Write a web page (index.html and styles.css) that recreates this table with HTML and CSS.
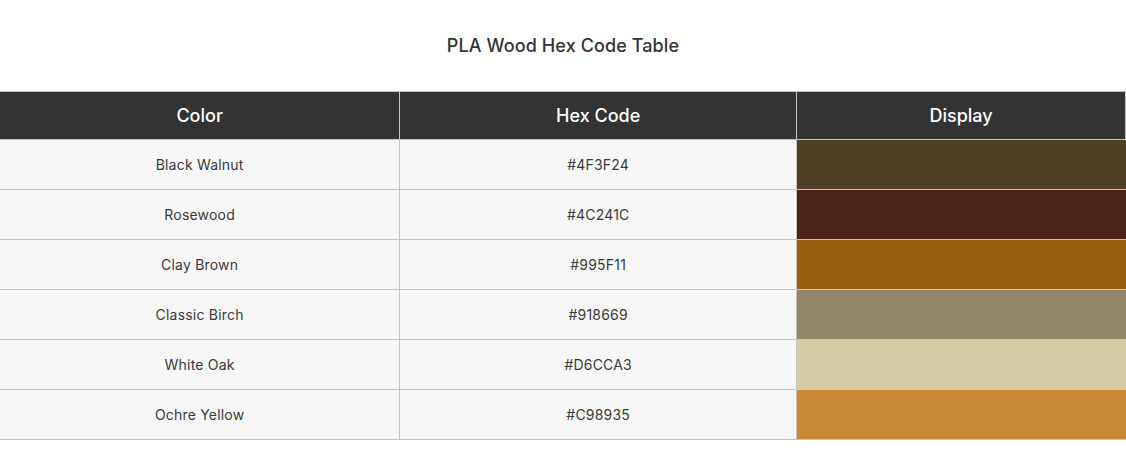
FILE: index.html
```html
<!DOCTYPE html>
<html>
<head>
<meta charset="utf-8">
<link rel="stylesheet" href="styles.css">
</head>
<body>
<div class="page">
  <h2 class="title">PLA Wood Hex Code Table</h2>
  <table class="hex-table">
    <colgroup>
      <col class="c1"><col class="c2"><col class="c3">
    </colgroup>
    <thead>
      <tr><th>Color</th><th>Hex Code</th><th>Display</th></tr>
    </thead>
    <tbody>
      <tr><td>Black Walnut</td><td>#4F3F24</td><td class="swatch" style="background:#4F3F24"></td></tr>
      <tr><td>Rosewood</td><td>#4C241C</td><td class="swatch" style="background:#4C241C"></td></tr>
      <tr><td>Clay Brown</td><td>#995F11</td><td class="swatch" style="background:#995F11"></td></tr>
      <tr><td>Classic Birch</td><td>#918669</td><td class="swatch" style="background:#918669"></td></tr>
      <tr><td>White Oak</td><td>#D6CCA3</td><td class="swatch" style="background:#D6CCA3"></td></tr>
      <tr><td>Ochre Yellow</td><td>#C98935</td><td class="swatch" style="background:#C98935"></td></tr>
    </tbody>
  </table>
</div>
</body>
</html>
```
FILE: styles.css
```css
html, body {
  margin: 0;
  padding: 0;
  background: #ffffff;
}
body {
  font-family: Inter, "Noto Sans", "Liberation Sans", sans-serif;
  color: #333333;
}
.page {
  padding-top: 35px;
}
.title {
  margin: 0 0 34px 0;
  text-align: center;
  font-size: 18px;
  font-weight: 500;
  line-height: 22px;
  letter-spacing: 0.1px;
  color: #333333;
}
.hex-table {
  width: 100%;
  border-collapse: collapse;
  table-layout: fixed;
}
.c1 { width: 35.52%; }
.c2 { width: 35.26%; }
.c3 { width: 29.22%; }
.hex-table th {
  background: #333333;
  color: #ffffff;
  font-size: 18px;
  font-weight: 500;
  height: 47px;
  padding: 0;
  border: 1px solid #c4c4c4;
  border-left: none;
}
.hex-table th + th {
  border-left: 1px solid #c4c4c4;
}
.hex-table td {
  background: #f7f7f7;
  font-size: 14px;
  font-weight: 400;
  letter-spacing: 0.2px;
  text-align: center;
  height: 49px;
  padding: 0;
  color: #3a3a3a;
  border: 1px solid #c4c4c4;
  border-left: none;
  border-right: none;
}
.hex-table td + td {
  border-left: 1px solid #c4c4c4;
}
```
